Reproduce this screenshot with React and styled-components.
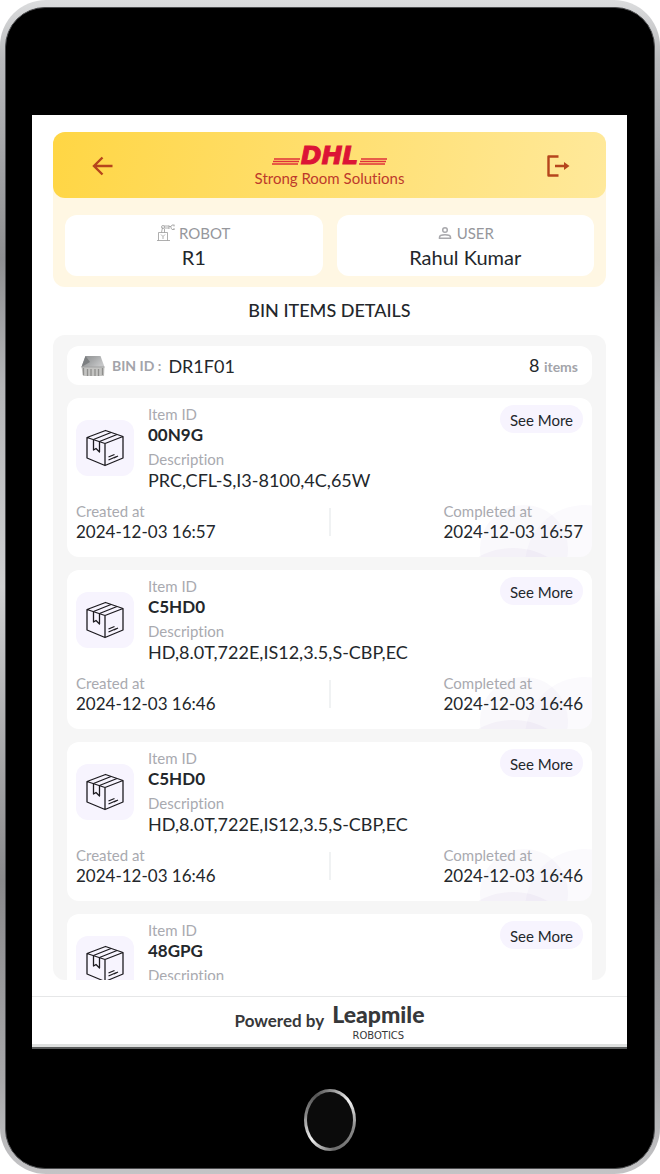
import React from "react";
import styled, { createGlobalStyle } from "styled-components";

const GlobalStyle = createGlobalStyle`
  * { box-sizing: border-box; }
  body {
    margin: 0;
    background: #fff;
    font-family: Lato, "Liberation Sans", sans-serif;
    font-variant-ligatures: none;
    color: #23272b;
  }
  h1, p, dl, dt, dd, ul { margin: 0; padding: 0; }
`;

const Device = styled.div`
  display: flex;
  height: 100vh;
  min-height: 720px;
  padding: 7px 5px 5px;
  border-radius: 46px;
  background: linear-gradient(180deg, #dcddde 0%, #b9babc 5%, #8e8f91 22%, #b5b6b8 33%, #cfd0d1 50%, #8a8a8c 75%, #a8a8aa 92%, #c4c4c6 100%);
`;

const Bezel = styled.div`
  flex: 1;
  min-width: 0;
  display: flex;
  flex-direction: column;
  align-items: center;
  padding: 107px 27px 17px 26px;
  border: 1px solid #4a4b4d;
  border-radius: 40px;
  background: #000;
`;

const Screen = styled.main`
  align-self: stretch;
  flex: 1;
  min-height: 0;
  display: flex;
  flex-direction: column;
  background: #fff;
  border-bottom: 2px solid #5a5c5c;
`;

const HomeButton = styled.button`
  flex: none;
  width: 52px;
  height: 62px;
  margin-top: 40px;
  padding: 3px;
  border: 0;
  border-radius: 50%;
  background: conic-gradient(#8a8a8a, #f2f2f2 12%, #8a8a8a 30%, #6c6c6c 48%, #f0f0f0 62%, #8a8a8a 78%, #555 92%, #8a8a8a);
  &::before {
    content: "";
    display: block;
    height: 100%;
    border-radius: 50%;
    background: #0b0b0b;
  }
`;

const Content = styled.div`
  flex: 1;
  min-height: 0;
  display: flex;
  flex-direction: column;
  padding: 17px 21px 16px;
`;

const Summary = styled.section`
  border-radius: 12px;
  background: #fff7e3;
`;

const Header = styled.header`
  display: flex;
  align-items: center;
  justify-content: space-between;
  height: 66px;
  padding: 2px 35px 0;
  border-radius: 12px;
  background: linear-gradient(100deg, #ffd644 0%, #ffdf70 50%, #ffe99b 100%);
`;

const IconButton = styled.button`
  display: flex;
  padding: 0;
  border: 0;
  background: none;
  color: #b6451c;
`;

const Brand = styled.div`
  display: flex;
  flex-direction: column;
  align-items: center;
`;

const DhlMark = styled.div`
  display: flex;
  align-items: center;
  gap: 1px;
  color: #dc1436;
  font-family: "DejaVu Sans", sans-serif;
  font-size: 25px;
  font-weight: 700;
  font-style: italic;
  line-height: 24px;
  -webkit-text-stroke: 1px #dc1436;
`;

const Tagline = styled.p`
  font-size: 15px;
  line-height: 20px;
  color: #bd3a2b;
`;

const InfoGrid = styled.div`
  display: grid;
  grid-template-columns: 1fr 1fr;
  gap: 14px;
  padding: 17px 12px 11px;
`;

const InfoCard = styled.div`
  display: flex;
  flex-direction: column;
  align-items: center;
  padding: 6px 8px 7px;
  border-radius: 12px;
  background: #fff;
`;

const InfoLabel = styled.p`
  display: flex;
  align-items: center;
  gap: 4px;
  font-size: 15px;
  line-height: 24px;
  color: #96979c;
`;

const InfoValue = styled.p`
  font-size: 20px;
  line-height: 24px;
`;

const Title = styled.h1`
  padding: 11px 0 13px;
  font-size: 18px;
  font-weight: 500;
  line-height: 24px;
  text-align: center;
`;

const Panel = styled.section`
  flex: 1;
  min-height: 0;
  display: flex;
  flex-direction: column;
  gap: 13px;
  padding: 11px 14px 0;
  border-radius: 12px;
  background: #f6f6f6;
  overflow-y: auto;
  scrollbar-width: none;
`;

const BinRow = styled.div`
  flex: none;
  display: flex;
  align-items: center;
  gap: 7px;
  height: 39px;
  padding: 0 14px;
  border-radius: 12px;
  background: #fff;
  font-size: 18px;
  line-height: 24px;
`;

const Muted = styled.span`
  font-size: 14px;
  font-weight: 700;
  color: #a3a4aa;
`;

const BinCount = styled.span`
  margin-left: auto;
`;

const ItemList = styled.ul`
  display: flex;
  flex-direction: column;
  gap: 13px;
  list-style: none;
`;

const ItemCard = styled.li`
  position: relative;
  display: flex;
  flex-direction: column;
  gap: 10px;
  padding: 6px 9px 14px;
  border-radius: 12px;
  background: #fff;
  overflow: hidden;
`;

const CardDecor = styled.svg`
  position: absolute;
  right: 0;
  bottom: 0;
`;

const ItemTop = styled.div`
  display: flex;
  align-items: center;
  gap: 14px;
`;

const Thumb = styled.div`
  display: flex;
  align-items: center;
  justify-content: center;
  width: 58px;
  height: 56px;
  border-radius: 12px;
  background: #f7f4fe;
`;

const Fields = styled.dl`
  position: relative;
  flex: ${(p) => (p.$grow ? 1 : "none")};
  min-width: 0;
  display: flex;
  flex-direction: column;
  gap: 3px;
`;

const Label = styled.dt`
  font-size: 15px;
  line-height: 20px;
  color: #a9aab0;
`;

const Value = styled.dd`
  font-size: ${(p) => (p.$large ? 18 : 17)}px;
  font-weight: ${(p) => (p.$strong ? 700 : 400)};
  line-height: 22px;
`;

const SeeMore = styled.button`
  align-self: flex-start;
  height: 28px;
  margin-top: 1px;
  padding: 2px 10px 0;
  border: 0;
  border-radius: 14px;
  background: #f7f4fe;
  color: #23272b;
  font-family: inherit;
  font-size: 15px;
`;

const ItemDates = styled.div`
  display: flex;
  align-items: center;
  justify-content: space-between;
`;

const Divider = styled.span`
  width: 2px;
  height: 28px;
  background: #f0f2f3;
`;

const Footer = styled.footer`
  display: flex;
  align-items: center;
  justify-content: center;
  gap: 8px;
  height: 51px;
  border-top: 1px solid #e6e7e8;
  border-bottom: 3px solid #dfe1e0;
  font-size: 17px;
  font-weight: 700;
  color: #37383a;
`;

const Vendor = styled.span`
  display: flex;
  flex-direction: column;
  align-items: center;
  gap: 2px;
`;

const VendorName = styled.span`
  font-size: 23px;
  font-weight: 900;
  line-height: 28px;
`;

const VendorSub = styled.span`
  font-family: "DejaVu Sans", sans-serif;
  font-size: 10px;
  font-weight: 400;
  line-height: 12px;
`;

function ArrowLeft() {
  return (
    <svg width="26" height="26" viewBox="0 0 26 26" fill="none" stroke="currentColor" strokeWidth="2.4" aria-hidden="true">
      <path d="M24.500 13H6M14.500 4.500L6 13l8.500 8.500" />
    </svg>
  );
}

function LogoutIcon() {
  return (
    <svg width="26" height="26" viewBox="0 0 26 26" fill="none" stroke="currentColor" strokeWidth="2.400" strokeLinejoin="round" aria-hidden="true">
      <path d="M13.500 3.500H3.500v19h10M10 13H20" />
      <path d="M19 9l5.500 4-5.500 4z" fill="currentColor" stroke="none" />
    </svg>
  );
}

function Stripes() {
  return (
    <svg width="28" height="20" viewBox="0 0 28 20" stroke="#e0313a" strokeWidth="1.300" aria-hidden="true">
      <path d="M2 13H28M1 15.500H27M0 18H26" />
    </svg>
  );
}

function RobotIcon() {
  return (
    <svg width="18" height="18" viewBox="0 0 18 18" fill="none" stroke="#9b9b9b" strokeWidth="0.800" aria-hidden="true">
      <path d="M0 16.500h13M1.500 16.500v-8h9v8M4 10.500l2 2 2-2M6 12.500V15" />
      <path d="M4.500 8.500l1-5M7.500 8.500V5M7 2h5M7 4h5M12 1.500v3.500M12 2.500h2l1-1.500h2.500M14 4l1 1.500h2.500M14 2.500V4M17 1v1.500M17 4v1.500" />
      <circle cx="6" cy="3" r="1.500" />
    </svg>
  );
}

function UserIcon() {
  return (
    <svg width="16" height="16" viewBox="0 0 16 16" fill="none" stroke="#a9a9ad" strokeWidth="1.500" aria-hidden="true">
      <circle cx="8" cy="5" r="2.300" />
      <path d="M2.500 13.300v-1c0-1.500 2.500-2.500 5.500-2.500s5.500 1 5.500 2.500v1z" />
    </svg>
  );
}

function BinIcon() {
  return (
    <svg width="24" height="22" viewBox="0 0 24 22" aria-hidden="true">
      <defs>
        <linearGradient id="binInside" x1="0" y1="0" x2="1" y2="0.500">
          <stop offset="0" stopColor="#8c8e90" />
          <stop offset="0.500" stopColor="#a4a6a7" />
          <stop offset="1" stopColor="#c6c7c8" />
        </linearGradient>
      </defs>
      <path d="M4.500 1H19.500L23.500 12H0.500z" fill="url(#binInside)" />
      <path d="M4.500 1L9 7 0.500 12z" fill="#7c7f81" />
      <path d="M0.500 12H23.500L23 21H2z" fill="#c4c4c2" />
      <path d="M2.500 13v7M6.500 14v7M10 14v7M14 14v7M17.500 14v7M21.500 13v7" stroke="#8f8f8d" strokeWidth="1.300" />
      <path d="M0.500 12H23.500" stroke="#a0a1a1" />
    </svg>
  );
}

function BoxIcon() {
  return (
    <svg width="38" height="38" viewBox="0 0 38 38" fill="none" stroke="#1d1b20" strokeWidth="1.300" strokeLinejoin="round" aria-hidden="true">
      <path d="M1 8.500L19.500 1.500 37 7.500v21.500L19 36.500 1 29zM1 8.500l18 6L37 7.500M19 14.500v22" />
      <path d="M7.500 10.500L25 3.500M13.500 12.500L31 5.500M7.500 10.500v10.500l2.500-1.500 3.500 3.500V12.500" />
      <path d="M22.500 28l6-2.500M22.500 31l8-3.500M28 29l4-2" />
    </svg>
  );
}

const items = [
  { id: "00N9G", description: "PRC,CFL-S,I3-8100,4C,65W", time: "2024-12-03 16:57" },
  { id: "C5HD0", description: "HD,8.0T,722E,IS12,3.5,S-CBP,EC", time: "2024-12-03 16:46" },
  { id: "C5HD0", description: "HD,8.0T,722E,IS12,3.5,S-CBP,EC", time: "2024-12-03 16:46" },
  { id: "48GPG", description: "HD,8.0T,722E,IS12,3.5,S-CBP,EC", time: "2024-12-03 16:46" },
];

function Item({ item }) {
  return (
    <ItemCard>
      <CardDecor width="113" height="52" viewBox="0 0 113 52" fill="#5b3fa0" aria-hidden="true">
        <circle cx="45" cy="44" r="44" fillOpacity="0.030" />
        <circle cx="106" cy="60" r="60" fillOpacity="0.025" />
        <ellipse cx="34" cy="92" rx="60" ry="49" fillOpacity="0.040" />
      </CardDecor>
      <ItemTop>
        <Thumb><BoxIcon /></Thumb>
        <Fields $grow>
          <div>
            <Label>Item ID</Label>
            <Value $strong>{item.id}</Value>
          </div>
          <div>
            <Label>Description</Label>
            <Value $large>{item.description}</Value>
          </div>
        </Fields>
        <SeeMore type="button">See More</SeeMore>
      </ItemTop>
      <ItemDates>
        <Fields>
          <div>
            <Label>Created at</Label>
            <Value>{item.time}</Value>
          </div>
        </Fields>
        <Divider />
        <Fields>
          <div>
            <Label>Completed at</Label>
            <Value>{item.time}</Value>
          </div>
        </Fields>
      </ItemDates>
    </ItemCard>
  );
}

export default function App() {
  return (
    <>
      <GlobalStyle />
      <Device>
        <Bezel>
          <Screen>
            <Content>
              <Summary>
                <Header>
                  <IconButton type="button" aria-label="Back"><ArrowLeft /></IconButton>
                  <Brand>
                    <DhlMark>
                      <Stripes />
                      <span>DHL</span>
                      <Stripes />
                    </DhlMark>
                    <Tagline>Strong Room Solutions</Tagline>
                  </Brand>
                  <IconButton type="button" aria-label="Log out"><LogoutIcon /></IconButton>
                </Header>
                <InfoGrid>
                  <InfoCard>
                    <InfoLabel><RobotIcon />ROBOT</InfoLabel>
                    <InfoValue>R1</InfoValue>
                  </InfoCard>
                  <InfoCard>
                    <InfoLabel><UserIcon />USER</InfoLabel>
                    <InfoValue>Rahul Kumar</InfoValue>
                  </InfoCard>
                </InfoGrid>
              </Summary>
              <Title>BIN ITEMS DETAILS</Title>
              <Panel>
                <BinRow>
                  <BinIcon />
                  <Muted>BIN ID :</Muted>
                  <span>DR1F01</span>
                  <BinCount>8 <Muted>items</Muted></BinCount>
                </BinRow>
                <ItemList>
                  {items.map((item, i) => <Item key={i} item={item} />)}
                </ItemList>
              </Panel>
            </Content>
            <Footer>
              Powered by
              <Vendor>
                <VendorName>Leapmile</VendorName>
                <VendorSub>ROBOTICS</VendorSub>
              </Vendor>
            </Footer>
          </Screen>
          <HomeButton type="button" aria-label="Home" />
        </Bezel>
      </Device>
    </>
  );
}
